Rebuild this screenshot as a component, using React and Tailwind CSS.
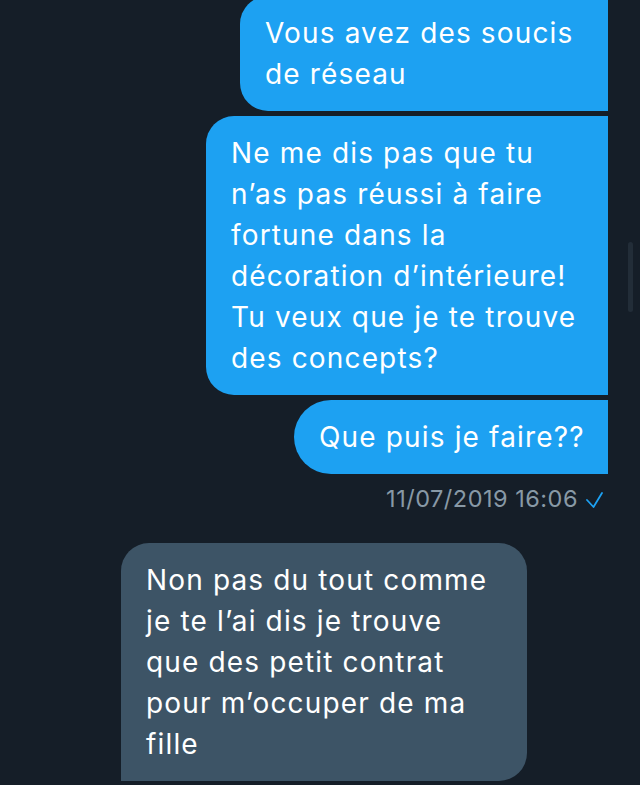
import React from 'react';

const sent = [
  { lines: ['Vous avez des soucis', 'de réseau'], width: 'w-[368px]', shape: 'rounded-l-[28px] -mt-[4px]' },
  {
    lines: [
      'Ne me dis pas que tu',
      'n’as pas réussi à faire',
      'fortune dans la',
      'décoration d’intérieure!',
      'Tu veux que je te trouve',
      'des concepts?',
    ],
    width: 'w-[402px]',
    shape: 'rounded-l-[28px] mt-[5px]',
  },
  { lines: ['Que puis je faire??'], width: 'w-[314px]', shape: 'rounded-l-[37px] mt-[5px]' },
];

const received = [
  'Non pas du tout comme',
  'je te l’ai dis je trouve',
  'que des petit contrat',
  'pour m’occuper de ma',
  'fille',
];

function Lines({ lines }) {
  return lines.map((l, i) => (
    <span key={i} className="block whitespace-nowrap">
      {l}
    </span>
  ));
}

export default function App() {
  return (
    <div className="relative h-[785px] w-[640px] overflow-hidden bg-[#151e28] font-['Inter','Liberation_Sans',sans-serif] text-white">
      <div className="flex flex-col items-end pr-[32px]">
        {sent.map((b, i) => (
          <div
            key={i}
            className={`${b.width} ${b.shape} bg-[#1da1f2] pl-[25px] pt-[17px] pb-[16px] text-[28px] leading-[41px] tracking-[1.15px]`}
          >
            <Lines lines={b.lines} />
          </div>
        ))}
        <div className="mt-[12px] flex items-center gap-[8px] pr-[5px] text-[23.5px] leading-[26px] tracking-[0.5px] text-[#8899a6]">
          <span>11/07/2019 16:06</span>
          <svg width="17" height="16" viewBox="0 0 17 16" fill="none" className="mt-[2px]">
            <path d="M1 8 L7.5 15 L16 1" stroke="#1da1f2" strokeWidth="1.8" strokeLinecap="round" strokeLinejoin="round" />
          </svg>
        </div>
      </div>

      <div className="mt-[31px] flex flex-col pl-[121px]">
        <div className="w-[406px] rounded-t-[28px] rounded-br-[28px] bg-[#3d5466] pl-[25px] pt-[17px] pb-[16px] text-[28px] leading-[41px] tracking-[1.15px]">
          <Lines lines={received} />
        </div>
        <div className="mt-[4px] h-[40px] w-[346px] rounded-tr-[28px] bg-[#3d5466]" />
      </div>

      <div className="absolute left-[628px] top-[242px] h-[70px] w-[5px] rounded-full bg-[#222d38]" />
    </div>
  );
}
